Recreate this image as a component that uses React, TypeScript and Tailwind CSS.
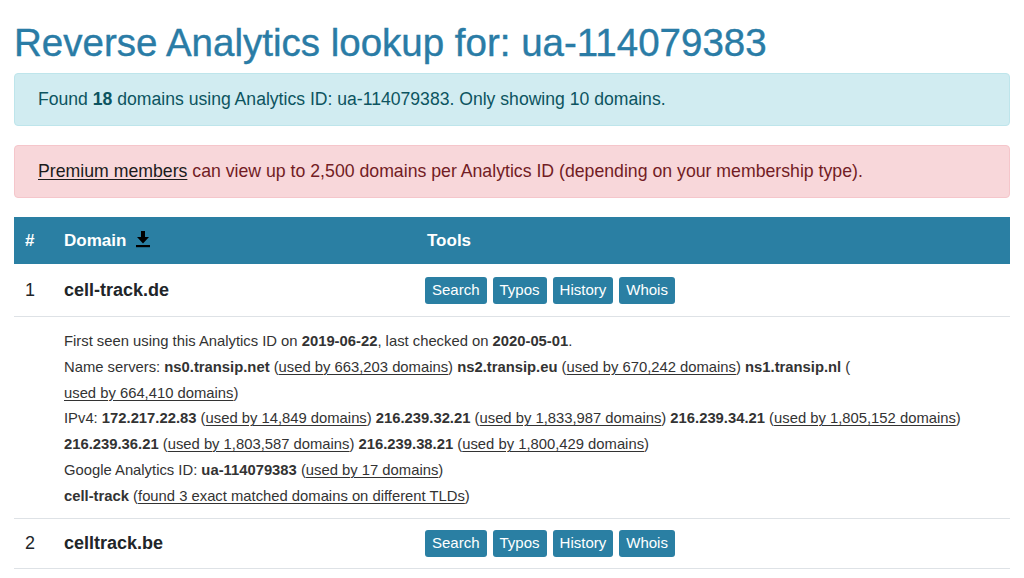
import React from "react";

const font = { fontFamily: '"Liberation Sans", Arial, sans-serif' };

const Used = ({ children }: { children: React.ReactNode }) => (
  <span className="underline underline-offset-2 decoration-1">{children}</span>
);

const ToolButtons = () => (
  <div className="flex gap-[6px]">
    {["Search", "Typos", "History", "Whois"].map((t) => (
      <span
        key={t}
        className="h-[27px] px-[7px] flex items-center rounded-[3px] bg-[#2a7fa3] text-white text-[15px]"
      >
        {t}
      </span>
    ))}
  </div>
);

const DownloadIcon = () => (
  <svg width="16" height="18" viewBox="0 0 16 18" className="ml-[9px] mt-[-4px]">
    <path d="M6 1h4v6h4l-6 6.5L2 7h4z" fill="#000" />
    <rect x="1" y="15" width="14" height="2.2" fill="#000" />
  </svg>
);

export default function App() {
  return (
    <div className="w-[1024px] h-[578px] overflow-hidden bg-white px-[14px] text-[#212529]" style={font}>
      <h1 className="text-[38.5px] leading-[44px] text-[#2a7ca6] pt-[21px] mb-[8px] [-webkit-text-stroke:0.4px_#2a7ca6]">
        Reverse Analytics lookup for: ua-114079383
      </h1>

      <div className="w-[996px] h-[53px] flex items-center px-[23px] rounded-[4px] bg-[#d1ecf1] border border-[#bee5eb] text-[#0c5460] text-[17.6px]">
        <span>
          Found <b>18</b> domains using Analytics ID: ua-114079383. Only showing 10 domains.
        </span>
      </div>

      <div className="w-[996px] h-[53px] mt-[19px] flex items-center px-[23px] rounded-[4px] bg-[#f8d7da] border border-[#f5c6cb] text-[#721c24] text-[17.7px]">
        <span>
          <span className="text-[#1b1b1b] underline underline-offset-2">Premium members</span> can view up
          to 2,500 domains per Analytics ID (depending on your membership type).
        </span>
      </div>

      <div className="w-[996px] mt-[19px]">
        <div className="h-[47px] flex items-center bg-[#2a7fa3] text-white font-bold text-[17px]">
          <div className="w-[50px] pl-[11px]">#</div>
          <div className="w-[361px] flex items-center">
            Domain
            <DownloadIcon />
          </div>
          <div className="flex-1 pl-[2px]">Tools</div>
        </div>

        <div className="h-[53px] flex items-center border-b border-[#dee2e6] text-[18px]">
          <div className="w-[50px] pl-[11px]">1</div>
          <div className="w-[361px] font-bold">cell-track.de</div>
          <ToolButtons />
        </div>

        <div className="h-[202px] pl-[50px] pt-[12px] border-b border-[#dee2e6] text-[14.8px] leading-[25.8px] text-[#333]">
          <div>
            First seen using this Analytics ID on <b>2019-06-22</b>, last checked on <b>2020-05-01</b>.
          </div>
          <div>
            Name servers: <b>ns0.transip.net</b> (<Used>used by 663,203 domains</Used>){" "}
            <b>ns2.transip.eu</b> (<Used>used by 670,242 domains</Used>) <b>ns1.transip.nl</b> (
          </div>
          <div>
            <Used>used by 664,410 domains</Used>)
          </div>
          <div>
            IPv4: <b>172.217.22.83</b> (<Used>used by 14,849 domains</Used>) <b>216.239.32.21</b> (
            <Used>used by 1,833,987 domains</Used>) <b>216.239.34.21</b> (
            <Used>used by 1,805,152 domains</Used>)
          </div>
          <div>
            <b>216.239.36.21</b> (<Used>used by 1,803,587 domains</Used>) <b>216.239.38.21</b> (
            <Used>used by 1,800,429 domains</Used>)
          </div>
          <div>
            Google Analytics ID: <b>ua-114079383</b> (<Used>used by 17 domains</Used>)
          </div>
          <div>
            <b>cell-track</b> (<Used>found 3 exact matched domains on different TLDs</Used>)
          </div>
        </div>

        <div className="h-[50px] flex items-center border-b border-[#dee2e6] text-[18px]">
          <div className="w-[50px] pl-[11px]">2</div>
          <div className="w-[361px] font-bold">celltrack.be</div>
          <ToolButtons />
        </div>
      </div>
    </div>
  );
}
